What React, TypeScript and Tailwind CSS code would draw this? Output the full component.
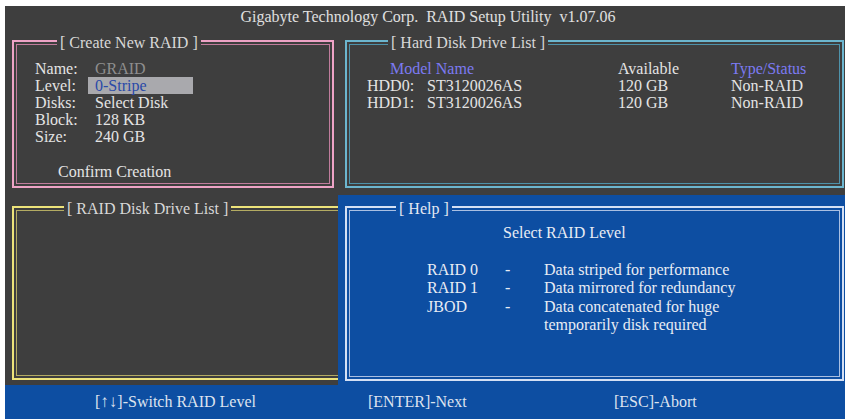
import React from "react";

type BoxProps = {
  title: string;
  outer: string;
  inner: string;
  titleCls: string;
  className?: string;
  children?: React.ReactNode;
};

// double-line BIOS style frame, title sits over the top lines
const Box = ({ title, outer, inner, titleCls, className, children }: BoxProps) => (
  <div className={`relative border-2 p-[2px] ${outer} ${className ?? ""}`}>
    <div className={`h-full border ${inner}`}>{children}</div>
    <span className={`absolute top-[-8px] px-[3px] leading-[18px] whitespace-pre ${titleCls}`}>
      {title}
    </span>
  </div>
);

export default function App() {
  return (
    <div
      className="w-[845px] h-[419px] bg-white pl-[5px] pt-[6px] text-[16px] text-[#e4e4e4]"
      style={{ fontFamily: '"Liberation Serif", "Times New Roman", serif' }}
    >
      <div className="w-[840px] h-[413px] bg-[#3e3e3e] flex flex-col">
        <div className="h-[22px] leading-[22px] pl-[6px] text-center whitespace-pre text-[#e0e0e0]">
          Gigabyte Technology Corp.  RAID Setup Utility  v1.07.06
        </div>

        {/* top row */}
        <div className="mt-[12px] h-[148px] pl-[7px] flex gap-[11px]">
          <Box
            title="[ Create New RAID ]"
            outer="border-[#eea3c6]"
            inner="border-[#c07c9c]"
            titleCls="left-[43px] bg-[#3e3e3e] text-[#d8d8d8]"
            className="w-[322px] h-full"
          >
            <div className="pl-[18px] pt-[15px] leading-[17px]">
              <div className="flex">
                <span className="w-[60px]">Name:</span>
                <span className="text-[#8e8e8e]">GRAID</span>
              </div>
              <div className="flex">
                <span className="w-[60px]">Level:</span>
                <span className="w-[105px] -ml-[7px] pl-[7px] bg-[#a9a9ad] text-[#2a4aa8]">0-Stripe</span>
              </div>
              <div className="flex">
                <span className="w-[60px]">Disks:</span>
                <span>Select Disk</span>
              </div>
              <div className="flex">
                <span className="w-[60px]">Block:</span>
                <span>128 KB</span>
              </div>
              <div className="flex">
                <span className="w-[60px]">Size:</span>
                <span>240 GB</span>
              </div>
              <div className="mt-[18px] pl-[23px]">Confirm Creation</div>
            </div>
          </Box>

          <Box
            title="[ Hard Disk Drive List ]"
            outer="border-[#6cb6cf]"
            inner="border-[#4e92aa]"
            titleCls="left-[41px] bg-[#3e3e3e] text-[#d8d8d8]"
            className="w-[499px] h-full"
          >
            <div className="pl-[17px] pt-[15px] leading-[17px] grid grid-cols-[60px_191px_113px_1fr]">
              <span className="col-span-2 pl-[23px] text-[#7c7af2]">Model Name</span>
              <span>Available</span>
              <span className="text-[#7c7af2]">Type/Status</span>
              <span>HDD0:</span>
              <span>ST3120026AS</span>
              <span>120 GB</span>
              <span>Non-RAID</span>
              <span>HDD1:</span>
              <span>ST3120026AS</span>
              <span>120 GB</span>
              <span>Non-RAID</span>
            </div>
          </Box>
        </div>

        {/* bottom row */}
        <div className="mt-[7px] h-[190px] flex">
          <div className="w-[333px] h-full overflow-hidden pl-[7px] pt-[11px] pb-[5px]">
            <Box
              title="[ RAID Disk Drive List ]"
              outer="border-[#ede37a]"
              inner="border-[#b3ab62]"
              titleCls="left-[50px] bg-[#3e3e3e] text-[#d8d8d8]"
              className="w-[360px] h-full"
            />
          </div>
          <div className="flex-1 h-full bg-[#0d4ea2] pl-[7px] pr-[1px] pt-[11px] pb-[4px]">
            <Box
              title="[ Help ]"
              outer="border-[#d4e0f4]"
              inner="border-[#a9bfe2]"
              titleCls="left-[49px] bg-[#0d4ea2] text-[#e4e8f2]"
              className="w-full h-full"
            >
              <div className="pt-[13px] leading-[18.5px] text-[#e8ecf4]">
                <div className="pl-[153px]">Select RAID Level</div>
                <div className="mt-[18px] pl-[77px] grid grid-cols-[78px_39px_1fr]">
                  <span>RAID 0</span>
                  <span>-</span>
                  <span>Data striped for performance</span>
                  <span>RAID 1</span>
                  <span>-</span>
                  <span>Data mirrored for redundancy</span>
                  <span>JBOD</span>
                  <span>-</span>
                  <span>Data concatenated for huge</span>
                  <span></span>
                  <span></span>
                  <span>temporarily disk required</span>
                </div>
              </div>
            </Box>
          </div>
        </div>

        {/* key hints */}
        <div className="h-[34px] bg-[#0d4ea2] flex items-center text-[#dde3ef]">
          <span className="w-[363px] pl-[90px]">
            [<span className="text-[17px] font-bold">↑↓</span>]-Switch RAID Level
          </span>
          <span className="w-[246px]">[ENTER]-Next</span>
          <span>[ESC]-Abort</span>
        </div>
      </div>
    </div>
  );
}
